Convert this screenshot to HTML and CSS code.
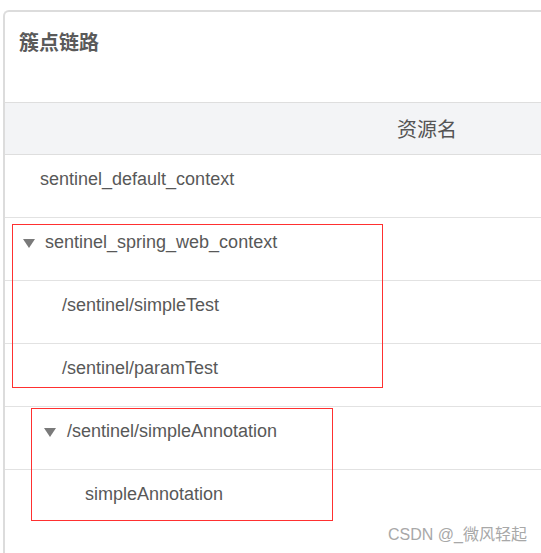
FILE: index.html
```html
<!DOCTYPE html>
<html lang="zh">
<head>
<meta charset="utf-8">
<title>簇点链路</title>
<link rel="stylesheet" href="styles.css">
</head>
<body>
<div class="panel">
  <div class="panel-title">簇点链路</div>
  <div class="table">
    <div class="thead">资源名</div>
    <div class="row lv0">sentinel_default_context</div>
    <div class="row lv0 arrowed"><span class="arrow"></span>sentinel_spring_web_context</div>
    <div class="row lv1">/sentinel/simpleTest</div>
    <div class="row lv1">/sentinel/paramTest</div>
    <div class="row lv1 arrowed"><span class="arrow"></span>/sentinel/simpleAnnotation</div>
    <div class="row lv2 last">simpleAnnotation</div>
  </div>
</div>
<div class="mark mark-a"></div>
<div class="mark mark-b"></div>
<div class="watermark">CSDN @_微风轻起</div>
</body>
</html>
```
FILE: styles.css
```css
html, body {
  margin: 0;
  padding: 0;
  background: #fff;
  overflow: hidden;
}
body {
  width: 541px;
  height: 553px;
  position: relative;
  font-family: "Liberation Sans", Arial, "Noto Sans CJK SC", sans-serif;
  color: #555;
}
.panel {
  margin: 10px 0 0 3px;
  height: 543px;
  box-sizing: border-box;
  border-top: 2px solid #dcdcdc;
  border-left: 2px solid #dcdcdc;
  border-top-left-radius: 6px;
  background: #fff;
}
.panel-title {
  height: 90px;
  box-sizing: border-box;
  padding: 16px 0 0 14px;
  font-size: 20px;
  line-height: 28px;
  font-weight: bold;
  color: #5a5a5a;
  font-family: "Noto Sans CJK SC", sans-serif;
}
.thead {
  height: 53px;
  box-sizing: border-box;
  border-top: 1px solid #dedede;
  border-bottom: 1px solid #dedede;
  background: #f3f4f6;
  line-height: 51px;
  padding-left: 392px;
  font-size: 20px;
  font-family: "Noto Sans CJK SC", sans-serif;
  color: #555;
}
.row {
  display: flex;
  align-items: center;
  height: 63px;
  box-sizing: border-box;
  border-bottom: 1px solid #e2e2e2;
  padding-bottom: 15px;
  font-size: 18px;
  line-height: 24px;
  color: #585858;
}
.row.last { border-bottom: none; }
.lv0 { padding-left: 35px; }
.lv1 { padding-left: 57px; }
.lv2 { padding-left: 80px; }
.lv0.arrowed { padding-left: 18px; }
.lv1.arrowed { padding-left: 39px; }
.arrow {
  width: 0;
  height: 0;
  border-left: 6px solid transparent;
  border-right: 6px solid transparent;
  border-top: 9px solid #7a7a7a;
  margin: 3px 10px 0 0;
}
.lv1.arrowed .arrow { margin-right: 11px; }
.mark {
  position: absolute;
  border: 1px solid #ff3030;
  box-sizing: border-box;
}
.mark-a { left: 12px; top: 224px; width: 371px; height: 164px; }
.mark-b { left: 31px; top: 408px; width: 302px; height: 113px; }
.watermark {
  position: absolute;
  left: 388px;
  top: 525px;
  font-size: 16px;
  line-height: 20px;
  color: #a8a8a8;
  font-family: "Liberation Sans", Arial, "Noto Sans CJK SC", sans-serif;
}
```
